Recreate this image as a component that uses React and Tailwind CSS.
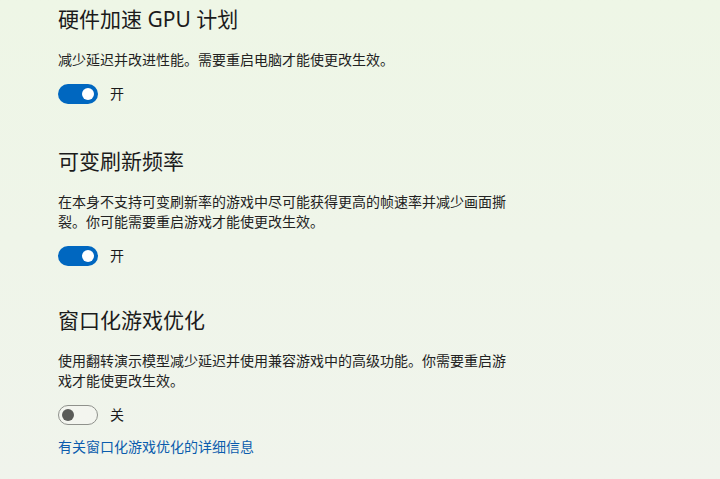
import { useState } from 'react';

const sections = [
  {
    title: '硬件加速 GPU 计划',
    desc: '减少延迟并改进性能。需要重启电脑才能使更改生效。',
    on: true,
  },
  {
    title: '可变刷新频率',
    desc: '在本身不支持可变刷新率的游戏中尽可能获得更高的帧速率并减少画面撕裂。你可能需要重启游戏才能使更改生效。',
    on: true,
  },
  {
    title: '窗口化游戏优化',
    desc: '使用翻转演示模型减少延迟并使用兼容游戏中的高级功能。你需要重启游戏才能使更改生效。',
    on: false,
    link: '有关窗口化游戏优化的详细信息',
  },
];

const Toggle = ({ on, onChange }) => (
  <button
    type="button"
    onClick={onChange}
    className={
      on
        ? 'relative w-10 h-5 rounded-full bg-[#0067c0] flex items-center justify-end pr-[4px]'
        : 'relative w-10 h-5 rounded-full border border-[#8f918c] bg-[#f3f5ef] flex items-center justify-start pl-[3px]'
    }
  >
    <span
      className={
        on
          ? 'block w-3 h-3 rounded-full bg-white'
          : 'block w-3 h-3 rounded-full bg-[#5a5b58]'
      }
    />
  </button>
);

export default function App() {
  const [state, setState] = useState(sections.map(s => s.on));

  return (
    <div
      className="w-[720px] h-[479px] overflow-hidden bg-gradient-to-b from-[#eef6e6] to-[#f0f4ec] text-[#1b1b1b]"
      style={{ fontFamily: '"Noto Sans", "Noto Sans CJK SC", sans-serif' }}
    >
      <div className="pl-[58px] pt-[5px] flex flex-col">
        {sections.map((s, i) => (
          <div key={i} className={i === 0 ? 'flex flex-col' : i === 1 ? 'flex flex-col mt-[43px]' : 'flex flex-col mt-[40px]'}>
            <h2 className="text-[21px] leading-[28px] font-normal">{s.title}</h2>
            <p className="mt-[17px] w-[456px] text-[14px] leading-[20px] text-[#222]">{s.desc}</p>
            <div className="mt-[14px] flex items-center gap-3 h-5">
              <Toggle
                on={state[i]}
                onChange={() => setState(st => st.map((v, j) => (j === i ? !v : v)))}
              />
              <span className="text-[14px] leading-[20px]">{state[i] ? '开' : '关'}</span>
            </div>
            {s.link && (
              <a href="#" className="mt-3 text-[14px] leading-[20px] text-[#0b5cad]">
                {s.link}
              </a>
            )}
          </div>
        ))}
      </div>
    </div>
  );
}
